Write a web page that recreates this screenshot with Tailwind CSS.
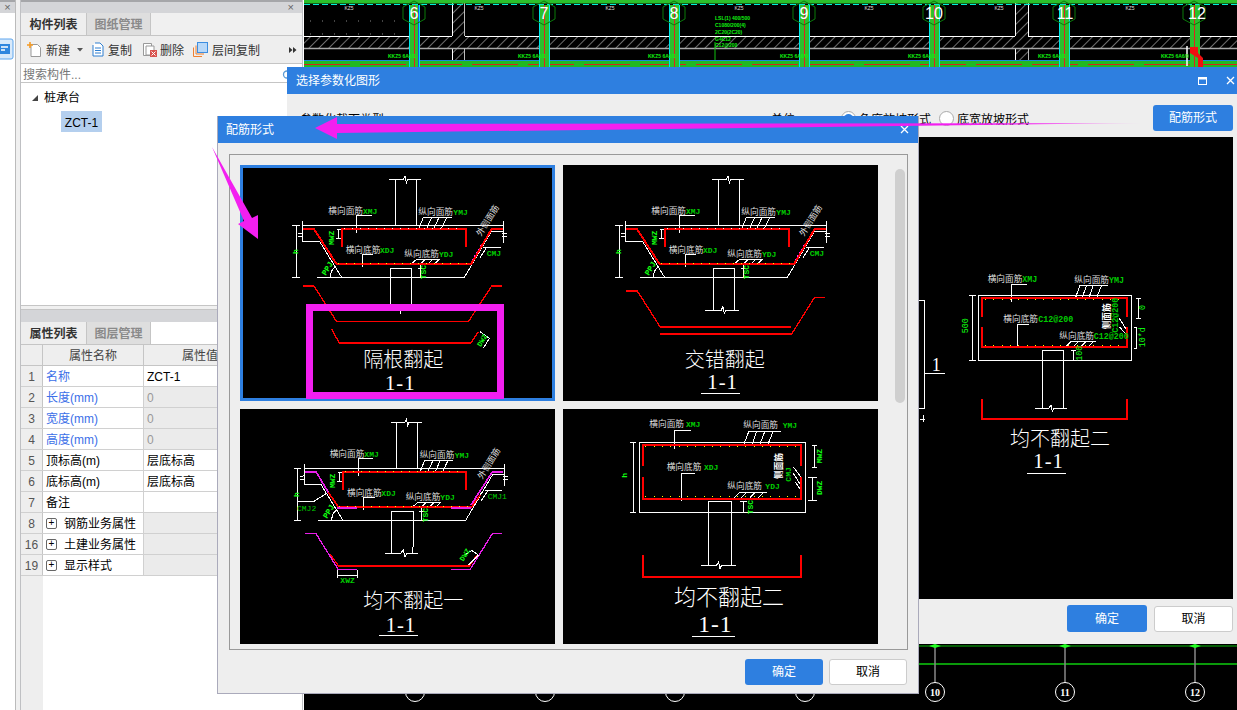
<!DOCTYPE html>
<html lang="zh">
<head>
<meta charset="utf-8">
<script src="https://cdn.jsdelivr.net/npm/@tailwindcss/browser@4"></script>
<title>配筋形式</title>
</head>
<body class="[font-family:'Liberation_Sans','Noto_Sans_CJK_SC',sans-serif] text-[12px] text-black">
<div class="relative w-[1237px] h-[710px] overflow-hidden bg-white flex">

  <!-- far-left sliver -->
  <div class="w-[15px] shrink-0 flex flex-col bg-white">
    <div class="h-[13px] bg-[#d4d5d8] border-t-2 border-[#a5a6a9] flex items-center justify-center text-[11px] leading-none text-[#666]">×</div>
    <svg class="mt-[25px]" width="14" height="22" viewBox="0 0 14 22"><rect x="-3" y="1" width="16" height="20" rx="2" fill="#d8e9fa" stroke="#5ea6ee"/><rect x="-1" y="6" width="11" height="10" fill="#2f86de"/><path d="M1 9H8M1 12H5" stroke="#fff" stroke-width="1.5"/></svg>
  </div>
  <div class="w-[5px] shrink-0 bg-[#f0f0f0] border-l border-[#bbb]"></div>

  <!-- left panels -->
  <div class="w-[283px] shrink-0 flex flex-col border-x border-[#bfc0c3] bg-white">
    <div class="h-[305px] flex flex-col">
      <div class="h-[13px] bg-[#d4d5d8] border-t-2 border-[#a5a6a9] flex items-center justify-end pr-[8px] text-[11px] leading-none text-[#666]">×</div>
      <div class="h-[23px] flex bg-[#f0f0f0] border-b border-[#c5c5c5]">
        <div class="w-[65px] pt-[2px] flex items-center justify-center font-bold text-[#333] bg-[#eeeeee]">构件列表</div>
        <div class="w-[65px] pt-[2px] flex items-center justify-center font-bold text-[#8a8a8a] bg-[#dedede] border-x border-[#c5c5c5]">图纸管理</div>
      </div>
      <div class="h-[28px] flex items-center bg-[#eeeeee] border-b border-[#c5c5c5] text-[#333] pl-[6px]">
        <svg width="15" height="15" viewBox="0 0 15 15"><path d="M4 2.5H10.5L13.5 5.5V14.5H4Z" fill="#fff" stroke="#999"/><path d="M3 0V6M0 3H6" stroke="#f59a23" stroke-width="1.6"/></svg>
        <span class="ml-[4px] pt-[3px]">新建</span>
        <svg class="ml-[7px]" width="6" height="4" viewBox="0 0 6 4"><path d="M0 0H6L3 3.5Z" fill="#555"/></svg>
        <svg class="ml-[7px]" width="15" height="15" viewBox="0 0 15 15"><path d="M5 1H10L13 4V14H3V3" fill="#fff" stroke="#2e7fd0"/><path d="M5 6H11M5 8.5H11M5 11H11" stroke="#2e7fd0"/></svg>
        <span class="ml-[3px] pt-[3px]">复制</span>
        <svg class="ml-[10px]" width="16" height="15" viewBox="0 0 16 15"><path d="M1.5 1.5H9.5V13.5H1.5Z" fill="#fff" stroke="#999"/><path d="M4 4H12V13H4Z" fill="#fff" stroke="#999"/><rect x="8" y="8" width="7" height="7" fill="#d9534f"/><path d="M9.5 9.5L13.5 13.5M13.5 9.5L9.5 13.5" stroke="#fff"/></svg>
        <span class="ml-[2px] pt-[3px]">删除</span>
        <svg class="ml-[9px]" width="15" height="15" viewBox="0 0 15 15"><path d="M0.5 14.5V5.5M0.5 14.5H9M3 12V3.5M3 12H11" stroke="#f08030" fill="none"/><rect x="4.5" y="0.5" width="10" height="10" fill="#b8d8f8" stroke="#3d8ee0"/></svg>
        <span class="ml-[4px] pt-[3px]">层间复制</span>
        <svg class="ml-auto mr-[5px]" width="8" height="6" viewBox="0 0 8 6"><path d="M0 0L3.500 3L0 6ZM4 0L7.500 3L4 6Z" fill="#333"/></svg>
      </div>
      <div class="h-[19px] flex items-center pl-[2px] pt-[3px] border-b border-[#c5c5c5] text-[#777]">
        <span>搜索构件...</span>
        <svg class="ml-auto mr-[10px]" width="10" height="10" viewBox="0 0 10 10"><circle cx="5" cy="4.500" r="3.500" fill="none" stroke="#5b9bd5" stroke-width="1.300"/></svg>
      </div>
      <div class="flex-1">
        <div class="flex items-center h-[21px] mt-[4px] pl-[11px]">
          <svg width="6" height="6" viewBox="0 0 6 6"><path d="M6 0V6H0Z" fill="#444"/></svg>
          <span class="ml-[6px]">桩承台</span>
        </div>
        <div class="ml-[40px] mt-[3px] w-[41px] h-[21px] pt-[2px] bg-[#b4cfee] flex items-center justify-center">ZCT-1</div>
      </div>
    </div>
    <div class="h-[5px] bg-[#f0f0f0] border-y border-[#c5c5c5]"></div>
    <div class="flex-1 flex flex-col">
      <div class="h-[12px] bg-[#d4d5d8]"></div>
      <div class="h-[23px] flex bg-white border-b border-[#c5c5c5]">
        <div class="w-[65px] pt-[2px] flex items-center justify-center font-bold text-[#333] bg-[#eeeeee]">属性列表</div>
        <div class="w-[65px] pt-[2px] flex items-center justify-center font-bold text-[#8a8a8a] bg-[#dedede] border-x border-[#c5c5c5]">图层管理</div>
      </div>
      <div class="flex h-[21px] border-b border-[#c5c5c5] bg-[#eeeeee] text-[#444]">
        <div class="w-[22px] border-r border-[#c5c5c5]"></div>
        <div class="w-[101px] pt-[2px] border-r border-[#c5c5c5] flex items-center justify-center">属性名称</div>
        <div class="flex-1 pt-[2px] flex items-center pl-[38px]">属性值</div>
      </div>
      <div class="flex h-[21px] border-b border-[#d0d0d0]"><div class="w-[22px] pt-[2px] bg-[#eeeeee] border-r border-[#c5c5c5] flex items-center justify-center text-[#555]">1</div><div class="w-[101px] pt-[2px] border-r border-[#d0d0d0] flex items-center pl-[3px] text-[#3b6fe8]">名称</div><div class="flex-1 pt-[2px] flex items-center pl-[3px]">ZCT-1</div></div>
      <div class="flex h-[21px] border-b border-[#d0d0d0]"><div class="w-[22px] pt-[2px] bg-[#eeeeee] border-r border-[#c5c5c5] flex items-center justify-center text-[#555]">2</div><div class="w-[101px] pt-[2px] border-r border-[#d0d0d0] flex items-center pl-[3px] text-[#3b6fe8]">长度(mm)</div><div class="flex-1 pt-[2px] flex items-center pl-[3px] bg-[#ebebeb] text-[#999]">0</div></div>
      <div class="flex h-[21px] border-b border-[#d0d0d0]"><div class="w-[22px] pt-[2px] bg-[#eeeeee] border-r border-[#c5c5c5] flex items-center justify-center text-[#555]">3</div><div class="w-[101px] pt-[2px] border-r border-[#d0d0d0] flex items-center pl-[3px] text-[#3b6fe8]">宽度(mm)</div><div class="flex-1 pt-[2px] flex items-center pl-[3px] bg-[#ebebeb] text-[#999]">0</div></div>
      <div class="flex h-[21px] border-b border-[#d0d0d0]"><div class="w-[22px] pt-[2px] bg-[#eeeeee] border-r border-[#c5c5c5] flex items-center justify-center text-[#555]">4</div><div class="w-[101px] pt-[2px] border-r border-[#d0d0d0] flex items-center pl-[3px] text-[#3b6fe8]">高度(mm)</div><div class="flex-1 pt-[2px] flex items-center pl-[3px] bg-[#ebebeb] text-[#999]">0</div></div>
      <div class="flex h-[21px] border-b border-[#d0d0d0]"><div class="w-[22px] pt-[2px] bg-[#eeeeee] border-r border-[#c5c5c5] flex items-center justify-center text-[#555]">5</div><div class="w-[101px] pt-[2px] border-r border-[#d0d0d0] flex items-center pl-[3px]">顶标高(m)</div><div class="flex-1 pt-[2px] flex items-center pl-[3px]">层底标高</div></div>
      <div class="flex h-[21px] border-b border-[#d0d0d0]"><div class="w-[22px] pt-[2px] bg-[#eeeeee] border-r border-[#c5c5c5] flex items-center justify-center text-[#555]">6</div><div class="w-[101px] pt-[2px] border-r border-[#d0d0d0] flex items-center pl-[3px]">底标高(m)</div><div class="flex-1 pt-[2px] flex items-center pl-[3px]">层底标高</div></div>
      <div class="flex h-[21px] border-b border-[#d0d0d0]"><div class="w-[22px] pt-[2px] bg-[#eeeeee] border-r border-[#c5c5c5] flex items-center justify-center text-[#555]">7</div><div class="w-[101px] pt-[2px] border-r border-[#d0d0d0] flex items-center pl-[3px]">备注</div><div class="flex-1"></div></div>
      <div class="flex h-[21px] border-b border-[#d0d0d0]"><div class="w-[22px] pt-[2px] bg-[#eeeeee] border-r border-[#c5c5c5] flex items-center justify-center text-[#555]">8</div><div class="w-[101px] border-r border-[#d0d0d0] flex items-center pl-[3px]"><span class="w-[11px] h-[11px] border border-[#666] rounded-[2px] flex items-center justify-center text-[10px] leading-none">+</span><span class="ml-[7px] pt-[2px]">钢筋业务属性</span></div><div class="flex-1 bg-[#ebebeb]"></div></div>
      <div class="flex h-[21px] border-b border-[#d0d0d0]"><div class="w-[22px] pt-[2px] bg-[#eeeeee] border-r border-[#c5c5c5] flex items-center justify-center text-[#555]">16</div><div class="w-[101px] border-r border-[#d0d0d0] flex items-center pl-[3px]"><span class="w-[11px] h-[11px] border border-[#666] rounded-[2px] flex items-center justify-center text-[10px] leading-none">+</span><span class="ml-[7px] pt-[2px]">土建业务属性</span></div><div class="flex-1 bg-[#ebebeb]"></div></div>
      <div class="flex h-[21px] border-b border-[#d0d0d0]"><div class="w-[22px] pt-[2px] bg-[#eeeeee] border-r border-[#c5c5c5] flex items-center justify-center text-[#555]">19</div><div class="w-[101px] border-r border-[#d0d0d0] flex items-center pl-[3px]"><span class="w-[11px] h-[11px] border border-[#666] rounded-[2px] flex items-center justify-center text-[10px] leading-none">+</span><span class="ml-[7px] pt-[2px]">显示样式</span></div><div class="flex-1 bg-[#ebebeb]"></div></div>
      <div class="flex-1 flex"><div class="w-[22px] bg-[#eeeeee]"></div></div>
    </div>
  </div>
  <div class="w-px shrink-0 bg-white"></div>

  <!-- CAD canvas -->
  <div class="flex-1 bg-black flex flex-col justify-between">
    <svg width="933" height="67" viewBox="304 0 933 67" font-family="Liberation Sans">
      <defs>
        <pattern id="hatch" width="7" height="7" patternUnits="userSpaceOnUse" patternTransform="rotate(45)"><rect width="7" height="7" fill="#000"/><path d="M0 0V7" stroke="#aaa" stroke-width="1.300"/></pattern>
      </defs>
      <rect x="304" y="37" width="933" height="11" fill="url(#hatch)"/>
      <rect x="452" y="0" width="13" height="67" fill="url(#hatch)"/>
      <rect x="1015" y="0" width="13" height="67" fill="url(#hatch)"/>
      <path d="M304 36.500H452M465 36.500H1015M1028 36.500H1237M452.500 0V36M1015.500 0V36M1028.500 0V36M452.500 48V67M1015.500 48V67" stroke="#fff" fill="none"/>
      <path d="M304 48.500H1237" stroke="#a8a8a8" stroke-width="1.600"/>
      <path d="M464.500 0V36M464.500 48V67M1028.500 48V67" stroke="#bbb"/>
      <rect x="304" y="0" width="933" height="3.500" fill="#2bc02b"/>
      <path d="M304 4.500H1237" stroke="#00f0d8" stroke-dasharray="6 3"/>
      <rect x="304" y="60" width="933" height="7" fill="#22b822"/>
      <path d="M304 60.500H1237" stroke="#1a88d8"/>
      <path d="M304 64.500H1237" stroke="#d82020" stroke-dasharray="46 10"/>
      <g fill="none">
        <path d="M409.500 5V67M419.500 5V67M539.500 5V67M549.500 5V67M669.500 5V67M679.500 5V67M799.500 5V67M809.500 5V67M929.500 5V67M939.500 5V67M1059.500 5V67M1069.500 5V67" stroke="#00e8e8"/>
        <g fill="#2bc02b"><rect x="410" y="5" width="9" height="62"/><rect x="540" y="5" width="9" height="62"/><rect x="670" y="5" width="9" height="62"/><rect x="800" y="5" width="9" height="62"/><rect x="930" y="5" width="9" height="62"/><rect x="1060" y="5" width="9" height="62"/><rect x="1190" y="5" width="10" height="62"/></g>
        <path d="M414.500 5V67M544.500 5V67M674.500 5V67M804.500 5V67M934.500 5V67M1064.500 5V67M1194.500 5V67" stroke="#e02020"/>
        <path d="M418.500 5V67" stroke="#1a50e8"/>
        <g stroke="#0a7a0a">
          <path d="M414 1L425 7V19L414 25L403 19V7Z"/><path d="M544 1L555 7V19L544 25L533 19V7Z"/><path d="M674 1L685 7V19L674 25L663 19V7Z"/><path d="M804 1L815 7V19L804 25L793 19V7Z"/><path d="M934 1L945 7V19L934 25L923 19V7Z"/><path d="M1064 1L1075 7V19L1064 25L1053 19V7Z"/><path d="M1194 1L1205 7V19L1194 25L1183 19V7Z"/>
        </g>
        <path d="M1190 47H1198V53L1203 58V67H1198V58L1190 53Z" fill="#f01010"/>
        <path d="M1187 46V66" stroke="#fff" stroke-width="1.500"/>
        <path d="M310 21H405M310 34H405" stroke="#888" stroke-dasharray="1 11"/>
      </g>
      <g fill="#fff" font-size="16" text-anchor="middle">
        <text x="414" y="19">6</text><text x="544" y="19">7</text><text x="674" y="19">8</text><text x="804" y="19">9</text><text x="934" y="19">10</text><text x="1065" y="19">11</text><text x="1197" y="19">12</text>
      </g>
      <g fill="#ddd" font-size="5" text-anchor="middle">
        <text x="349" y="10">KZ5</text><text x="479" y="10">KZ5</text><text x="610" y="10">KZ5</text><text x="739" y="10">KZ5</text><text x="869" y="10">KZ5</text><text x="999" y="10">KZ5</text><text x="1130" y="10">KZ5</text>
      </g>
      <g fill="#10f010" font-size="5" font-weight="bold">
        <text x="388" y="58">KKZ5 6A6/0</text><text x="518" y="58">KKZ5 6A6/0</text><text x="648" y="58">KKZ5 6A6/0</text><text x="780" y="58">KKZ5 6A6/0</text><text x="908" y="58">KKZ5 6A6/0</text><text x="1038" y="58">KKZ5 6A6/0</text><text x="1161" y="58">KKZ5 6A6/0</text>
        <text x="715" y="20">LSL(1) 400/500</text><text x="715" y="27">C1080/200(4)</text><text x="715" y="34">2C20(2C20)</text><text x="715" y="41">G4C12</text><text x="715" y="47">C12@200</text>
      </g>
      <path d="M715 42V60" stroke="#10c010"/>
    </svg>
    <svg width="933" height="68" viewBox="304 642 933 68" font-family="Liberation Serif">
      <path d="M304 646H1237" stroke="#0bb80b"/>
      <path d="M304 664H1237" stroke="#0a9a0a" stroke-width="2"/>
      <path d="M415 646V683M545 646V683M675 646V683M805 646V683M935 646V683M1065 646V683M1195 646V683" stroke="#888" stroke-width="1.500"/>
      <path d="M929 646L935 644L941 646L935 648ZM1059 646L1065 644L1071 646L1065 648ZM1189 646L1195 644L1201 646L1195 648Z" fill="#2f2"/>
      <g fill="none" stroke="#fff"><circle cx="415" cy="692" r="9.500"/><circle cx="545" cy="692" r="9.500"/><circle cx="675" cy="692" r="9.500"/><circle cx="805" cy="692" r="9.500"/><circle cx="935" cy="692" r="9.500"/><circle cx="1065" cy="692" r="9.500"/><circle cx="1195" cy="692" r="9.500"/></g>
      <g fill="#fff" font-size="10" text-anchor="middle" font-weight="bold"><text x="935" y="696">10</text><text x="1065" y="696">11</text><text x="1195" y="696">12</text></g>
    </svg>
  </div>

  <!-- dialog: 选择参数化图形 -->
  <div class="absolute left-[287px] top-[67px] w-[950px] h-[577px] bg-[#eeeeee] flex flex-col">
    <div class="h-[27px] bg-[#2e7fe0] text-white flex items-center pl-[9px] pr-[2px]">
      <span>选择参数化图形</span>
      <svg class="ml-auto" width="9" height="8" viewBox="0 0 9 8"><rect x="0.500" y="0.500" width="8" height="7" fill="none" stroke="#fff"/><path d="M0 1.500H9" stroke="#fff" stroke-width="2"/></svg>
      <svg class="ml-[19px]" width="9" height="9" viewBox="0 0 9 9"><path d="M1 1L8 8M8 1L1 8" stroke="#fff" stroke-width="1.300"/></svg>
    </div>
    <div class="h-[43px] flex items-center pl-[13px] pr-[4px] pt-[5px]">
      <span class="pt-[3px]">参数化截面类型</span>
      <span class="ml-[387px] pt-[3px]">单位</span>
      <span class="ml-[46px] w-[15px] h-[15px] rounded-full border border-[#aaa] bg-white flex items-center justify-center"><span class="w-[9px] h-[9px] rounded-full bg-[#2e7fe0]"></span></span>
      <span class="ml-[3px] pt-[3px]">角度放坡形式</span>
      <span class="ml-[8px] w-[15px] h-[15px] rounded-full border border-[#aaa] bg-white"></span>
      <span class="ml-[3px] pt-[3px]">底宽放坡形式</span>
      <button class="ml-auto w-[80px] h-[26px] rounded-[3px] bg-[#2e7fe0] text-white">配筋形式</button>
    </div>
    <div class="mx-[13px] mr-[4px] h-[462px] bg-black relative">
      <svg class="absolute right-[0px] top-[-7px]" width="328" height="380" viewBox="0 0 984 1140" font-family="Liberation Mono, Noto Sans CJK SC" shape-rendering="crispEdges">
        <g fill="none" stroke="#fff" stroke-width="3">
          <rect x="220" y="496" width="460" height="195"/>
          <path d="M193 496H212M202 496V691M193 691H212M320 515V463H365M338 655V584H372M525 465H608M510 508L525 465M530 508L545 465M550 508L565 465M573 508L590 465M483 650L498 635H572M505 650L520 635M528 650L543 635M550 650L565 635M412 835V661H475V835M390 835H432L438 825 442 845 447 835H486M692 505H708M700 505V566M692 566H708M688 592H695V656H688M497 660H513M505 660V691M643 565L665 600M643 590L665 615M42 511H58V835H42M58 730H120M44 868H60M55 855V875"/>
        </g>
        <path d="M232 560V505H666V560M232 591V650H666V591M232 808V866H666V808" fill="none" stroke="#f00" stroke-width="6"/>
        <path d="M240 508H660M240 647H660" stroke="#ff0" stroke-width="3" stroke-dasharray="3 22" fill="none"/>
        <g fill="#ddd" font-size="26" font-family="Noto Sans CJK SC"><text x="248" y="456">横向面筋</text><text x="508" y="460">纵向面筋</text><text x="295" y="577">横向底筋</text><text x="463" y="628">纵向底筋</text><text transform="translate(615 598) rotate(-90)" font-weight="bold" fill="#fff">侧面筋</text></g>
        <g fill="#0c0" font-size="25" font-weight="bold"><text x="352" y="456">XMJ</text><text x="612" y="460">YMJ</text><text x="400" y="576">C12@200</text><text x="566" y="627">C12@200</text><text transform="translate(640 608) rotate(-90)">C12@200</text></g>
        <g fill="#1f1" font-size="25"><text transform="translate(188 610) rotate(-90)">500</text><text transform="translate(720 540) rotate(-90)">0</text><text transform="translate(720 652) rotate(-90)">10*d</text><text transform="translate(532 692) rotate(-90)">100</text></g>
        <g fill="#fff" font-weight="200" font-family="Noto Sans CJK SC"><text x="315" y="948" font-size="60">均不翻起二</text><text x="80" y="724" font-size="54" font-family="Liberation Serif">1</text><text x="385" y="1015" font-size="62" letter-spacing="3" font-family="Liberation Serif">1-1</text></g>
        <path d="M367 1030H482" stroke="#fff" stroke-width="3"/>
      </svg>
    </div>
    <div class="flex-1 flex items-center justify-end gap-[7px] pr-[4px] pb-[6px]">
      <button class="w-[80px] h-[27px] rounded-[3px] bg-[#2e7fe0] text-white">确定</button>
      <button class="w-[79px] h-[26px] rounded-[3px] bg-white border border-[#ccc]">取消</button>
    </div>
  </div>

  <!-- dialog: 配筋形式 -->
  <div class="absolute left-[217px] top-[116px] w-[702px] h-[578px] bg-[#eeeeee] border-x border-b border-[#aab] flex flex-col">
    <div class="h-[27px] shrink-0 bg-[#2e7fe0] text-white flex items-center pl-[8px] pr-[9px]">
      <span>配筋形式</span>
      <svg class="ml-auto" width="9" height="9" viewBox="0 0 9 9"><path d="M1 1L8 8M8 1L1 8" stroke="#fff" stroke-width="1.300"/></svg>
    </div>
    <div class="mx-[11px] mt-[11px] w-[679px] h-[496px] bg-[#eeeeee] border border-[#999] relative pl-[10px] pt-[10px] flex">
      <div class="grid grid-cols-[315px_315px] grid-rows-[236px_235px] gap-x-[8px] gap-y-[8px]">

        <!-- card 1 -->
        <div class="relative bg-black">
          <svg class="block" width="315" height="236" viewBox="15 15 945 708" font-family="Liberation Mono, Noto Sans CJK SC" shape-rendering="crispEdges">
            <defs>
              <g id="struct">
                <path fill="none" stroke="#fff" stroke-width="3" d="M481 196V58M544 196V58M463 58H505L510 48 514 68 518 58H558M203 184V243H253L320 352M246 352H688L770 213H805M805 184V250M203 196H805M183 196V352M172 196H195M172 352H195M466 432V325H530V432M365 218V166H410M382 320V284H415M565 172H650M565 172L550 210M590 172L573 210M612 172L595 210M635 172L617 210M527 313L545 298H615M555 313L570 298M578 313L593 298M598 313L613 298M287 352A32 32 0 0 1 300 322M190 222L205 218M190 228H205M800 222L815 220M800 228H815M305 208H318M303 236H318M309 208V236M555 313V352M548 325H565M548 352H565M715 305L735 270M735 293L755 262"/>
                <g fill="#ddd" font-size="26" font-family="Noto Sans CJK SC"><text x="280" y="163">横向面筋</text><text x="550" y="166">纵向面筋</text><text x="332" y="280">横向底筋</text><text x="508" y="292">纵向底筋</text><text transform="translate(738 230) rotate(-58)">外侧面筋</text></g>
                <g fill="#0c0" font-size="24" font-weight="bold"><text x="384" y="162">XMJ</text><text x="655" y="166">YMJ</text><text x="435" y="279">XDJ</text><text x="612" y="292">YDJ</text></g>
                <g fill="#1f1" font-size="24" font-weight="bold"><text transform="translate(296 255) rotate(-90)">MWZ</text><text transform="translate(188 282) rotate(-90)">h</text><text transform="translate(574 358) rotate(-90)">TSC</text><text transform="translate(272 348) rotate(-58)">PPJ</text></g>
              </g>
              <g id="rebar-plain">
                <path d="M320 260V207H692V260M205 207H237L305 313H708L770 207H803" fill="none" stroke="#f00" stroke-width="6"/>
                <path d="M326 204H686" stroke="#ffe" stroke-width="3" stroke-dasharray="3 21" fill="none"/>
                <path d="M310 310H702" stroke="#ff0" stroke-width="3" stroke-dasharray="3 21" fill="none"/>
                <path d="M712 300L742 250" stroke="#f2f" stroke-width="3" stroke-dasharray="3 9" fill="none"/>
                <path d="M745 262H798" stroke="#fff" stroke-width="3"/>
                <text x="755" y="288" fill="#0c0" font-size="24" font-weight="bold">CMJ</text>
              </g>
            </defs>
            <use href="#struct"/><use href="#rebar-plain"/>
            <path d="M205 378H237L305 485H700L770 378H800M290 508L313 549H708L730 515" fill="none" stroke="#f00" stroke-width="4"/>
            <path d="M735 515L763 535L745 565" fill="none" stroke="#fff" stroke-width="3"/>
            <text transform="translate(737 562) rotate(-58)" fill="#1f1" font-size="22" font-weight="bold">DWZ</text>
            <path d="M497 450V463" stroke="#fff" stroke-width="3"/>
            <g fill="#fff" font-weight="200"><text x="385" y="620" font-family="Noto Sans CJK SC" font-size="60">隔根翻起</text><text x="450" y="690" font-family="Liberation Serif" font-size="62" letter-spacing="3">1-1</text></g>
          </svg>
          <div class="absolute inset-0 border-[3px] border-[#2e7fe0]"></div>
          <div class="absolute left-[66px] top-[139px] w-[198px] h-[95px] border-[7px] border-[#f31ff0]"></div>
        </div>

        <!-- card 2 -->
        <div class="bg-black">
          <svg class="block" width="315" height="236" viewBox="15 15 945 708" font-family="Liberation Mono, Noto Sans CJK SC" shape-rendering="crispEdges">
            <use href="#struct"/><use href="#rebar-plain"/>
            <path d="M204 393H238L306 500M701 522L769 413H801" fill="none" stroke="#f00" stroke-width="4"/>
            <path d="M306 500H698M306 522H701" fill="none" stroke="#f00" stroke-width="6"/>
            <path d="M466 432V450M530 432V450M442 450H490L495 440 499 462 503 450H542" fill="none" stroke="#fff" stroke-width="3"/>
            <g fill="#fff" font-weight="200"><text x="380" y="620" font-family="Noto Sans CJK SC" font-size="60">交错翻起</text><text x="448" y="688" font-family="Liberation Serif" font-size="62" letter-spacing="3">1-1</text></g>
            <path d="M428 700H546" stroke="#fff" stroke-width="3"/>
          </svg>
        </div>

        <!-- card 3 -->
        <div class="bg-black">
          <svg class="block" width="315" height="235" viewBox="15 12 945 705" font-family="Liberation Mono, Noto Sans CJK SC" shape-rendering="crispEdges">
            <g transform="translate(4 -6)"><use href="#struct"/></g>
            <path d="M325 255V201H692V255M310 306H710" fill="none" stroke="#f00" stroke-width="6"/>
            <path d="M210 200H243L280 262M708 300L772 201H805" fill="none" stroke="#e81fe8" stroke-width="5"/>
            <path d="M280 262L310 306M710 306L735 270" fill="none" stroke="#f00" stroke-width="5"/>
            <path d="M305 308H365M648 308H708" stroke="#e81fe8" stroke-width="5"/>
            <path d="M330 198H688M312 303H705" stroke="#ff0" stroke-width="3" stroke-dasharray="3 21" fill="none"/>
            <path d="M750 256H802M186 290H235L275 265" fill="none" stroke="#fff" stroke-width="3"/>
            <path d="M469 426V445M532 426V445M450 445H497L505 435 510 455 515 445H550" fill="none" stroke="#fff" stroke-width="3"/>
            <text x="758" y="281" fill="#0c0" font-size="24">CMJ1</text><text x="186" y="317" fill="#0c0" font-size="24">CMJ2</text>
            <path d="M210 386H243L310 494H365M648 494H705L772 386H800" fill="none" stroke="#e81fe8" stroke-width="4"/>
            <path d="M310 482H705" stroke="#f00" stroke-width="6"/>
            <path d="M285 447L310 482M705 482L725 450" fill="none" stroke="#f00" stroke-width="4"/>
            <path d="M308 496V518M366 496V518M308 510H366M690 450L710 436L730 450L700 480" fill="none" stroke="#fff" stroke-width="3"/>
            <text x="316" y="533" fill="#0c0" font-size="24" font-weight="bold">XWZ</text>
            <text transform="translate(685 470) rotate(-58)" fill="#1f1" font-size="22" font-weight="bold">DWZ</text>
            <g fill="#fff" font-weight="200"><text x="385" y="610" font-family="Noto Sans CJK SC" font-size="60">均不翻起一</text><text x="452" y="680" font-family="Liberation Serif" font-size="62" letter-spacing="3">1-1</text></g>
            <path d="M432 692H549" stroke="#fff" stroke-width="3"/>
          </svg>
        </div>

        <!-- card 4 -->
        <div class="bg-black">
          <svg class="block" width="315" height="235" viewBox="9 12 945 705" font-family="Liberation Mono, Noto Sans CJK SC" shape-rendering="crispEdges">
            <rect x="238" y="112" width="499" height="210" fill="none" stroke="#fff" stroke-width="3"/>
            <path fill="none" stroke="#fff" stroke-width="3" d="M210 112H228M219 112V322M210 322H228M343 133V76H393M365 287V205H405M567 78H662M550 122L567 78M575 122L590 78M598 122L615 78M622 122L640 78M523 278L540 262H620M545 278L560 262M570 278L585 262M595 278L610 262M445 480V290H515V480M423 480H470L476 470 480 492 485 480H527M540 290H560M551 290V322M755 122H770M762 122V188M755 188H770M745 216H770M758 216V285M745 285H770M700 186L722 215M700 205L722 240M705 230L722 255"/>
            <path d="M248 182V120H723V182M248 216V282H723V216M248 450V516H723V450" fill="none" stroke="#f00" stroke-width="6"/>
            <path d="M256 123H715M256 273H715" stroke="#ff0" stroke-width="3" stroke-dasharray="3 22" fill="none"/>
            <g fill="#ddd" font-size="26" font-family="Noto Sans CJK SC"><text x="268" y="67">横向面筋</text><text x="550" y="70">纵向面筋</text><text x="320" y="196">横向底筋</text><text x="502" y="252">纵向底筋</text><text transform="translate(666 222) rotate(-90)" font-weight="bold" fill="#fff">侧面筋</text></g>
            <g fill="#0c0" font-size="24" font-weight="bold"><text x="378" y="66">XMJ</text><text x="668" y="69">YMJ</text><text x="432" y="195">XDJ</text><text x="616" y="251">YDJ</text><text transform="translate(692 230) rotate(-90)">CMJ</text></g>
            <g fill="#1f1" font-size="24" font-weight="bold"><text transform="translate(200 218) rotate(-90)">h</text><text transform="translate(786 175) rotate(-90)">MWZ</text><text transform="translate(786 270) rotate(-90)">DWZ</text><text transform="translate(578 328) rotate(-90)">TSC</text></g>
            <g fill="#fff" font-weight="200"><text x="342" y="600" font-family="Noto Sans CJK SC" font-size="66">均不翻起二</text><text x="415" y="680" font-family="Liberation Serif" font-size="70" letter-spacing="3">1-1</text></g>
            <path d="M396 693H525" stroke="#fff" stroke-width="3"/>
          </svg>
        </div>
      </div>
      <div class="absolute left-[665px] top-[14px] w-[10px] h-[234px] rounded-[5px] bg-[#cfcfcf]"></div>
    </div>
    <div class="flex-1 flex items-center justify-end gap-[6px] pr-[11px]">
      <button class="w-[78px] h-[26px] rounded-[3px] bg-[#2e7fe0] text-white">确定</button>
      <button class="w-[78px] h-[26px] rounded-[3px] bg-white border border-[#ccc]">取消</button>
    </div>
  </div>

  <!-- annotation arrows -->
  <svg class="absolute left-0 top-0 pointer-events-none" width="1237" height="710" viewBox="0 0 1237 710">
    <defs>
      <linearGradient id="fade" x1="337" y1="0" x2="1143" y2="0" gradientUnits="userSpaceOnUse">
        <stop offset="0" stop-color="#f31ff0"/><stop offset="0.85" stop-color="#f31ff0"/><stop offset="1" stop-color="#f31ff0" stop-opacity="0.1"/>
      </linearGradient>
    </defs>
    <path d="M315 128L337 117V124L1143 123L337 133V139Z" fill="url(#fade)"/>
    <path d="M212 147L244 221L238 224L258 239L258 215L252 218Z" fill="#f31ff0"/>
  </svg>
</div>
</body>
</html>
